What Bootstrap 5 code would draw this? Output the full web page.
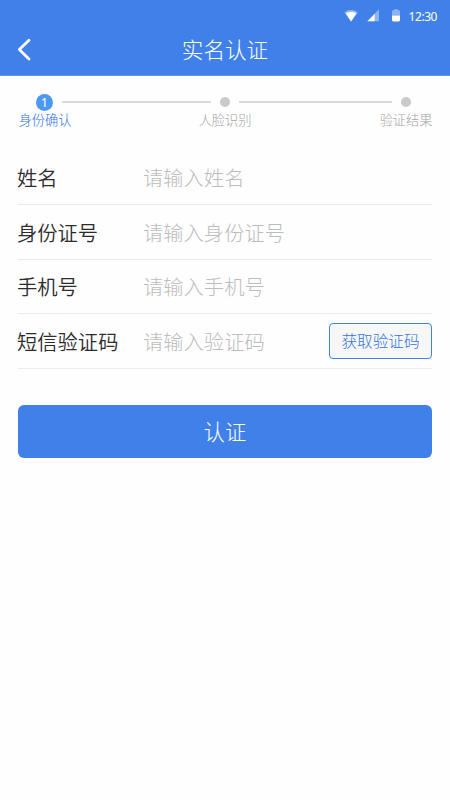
<!DOCTYPE html>
<html lang="zh-CN">
<head>
<meta charset="utf-8">
<meta name="viewport" content="width=device-width, initial-scale=1">
<title>实名认证</title>
<link href="https://cdn.jsdelivr.net/npm/bootstrap@5.3.0/dist/css/bootstrap.min.css" rel="stylesheet">
<style>
:root { --brand: #4081e9; }
body { font-family: "Noto Sans CJK SC", sans-serif; font-weight: 300; background: #fefefe; min-height: 800px; line-height: 1; }
.app-header { background: var(--brand); height: 76px; border-bottom: 1px solid #5b93ef; }
.status-bar { height: 31px; padding-right: 13px; padding-top: 1px; font: 400 12px/1 "Noto Sans", sans-serif; }
.status-bar .clock { margin-left: 9px; letter-spacing: -.45px; padding-top: 1px; }
.title-bar { display: grid; grid-template-columns: 50px 1fr 50px; height: 37px; }
.title-bar h1 { font-size: 21.6px; font-weight: 300; line-height: 35px; }
.back-link { padding-left: 17px; height: 37px; }
.stepper { padding: 16px 17.5px 0 18.5px; height: 54px; }
.step-item { width: 53px; font-size: 13.2px; color: #a4a4a4; }
.step-mark { height: 20px; }
.step-text { line-height: 16px; white-space: nowrap; }
.step-item.current { color: #2f74e6; }
.step-item.current .step-mark { padding-right: 1px; }
.step-dot { width: 10px; height: 10px; background: #cacaca; }
.step-num { width: 17px; height: 17px; background: #4a98f2; font: 400 13px/17px "Noto Sans", sans-serif; }
.step-line { height: 2px; background: #dadada; margin-top: 9px; }
.step-line.first { flex: 149 1 0; margin-left: -9.5px; margin-right: -12.5px; }
.step-line.second { flex: 153 1 0; margin-left: -12.5px; margin-right: -12.5px; }
.auth-form { margin: 20px 18px 0; }
.form-line { height: 54.67px; border-bottom: 1px solid #ebebeb; font-size: 20.3px; }
.form-line:nth-child(1) { height: 55px; }
.form-line:nth-child(2) { height: 54.6px; }
.form-line:nth-child(4) { height: 54.4px; }
.form-line label { flex: 0 0 126px; margin-left: -1px; color: #2c2c2c; font-weight: 350; white-space: nowrap; }
.form-line .form-control { font-size: 20.3px; font-weight: 300; height: 40px; min-width: 0; color: #2c2c2c; }
.form-line .form-control::placeholder { color: #bcbcbc; opacity: 1; }
.btn-code { width: 103px; height: 36px; border: 1px solid var(--brand); border-radius: 4px; background: #f7f7f7; color: #2f74e6; font-size: 15.6px; font-weight: 300; white-space: nowrap; }
.btn-submit { height: 53px; margin-top: 36px; border-radius: 6px; background: var(--brand); font-size: 21.4px; font-weight: 300; }
.btn-submit:hover { background: #3373dc; }
</style>
</head>
<body>
<header class="app-header text-white">
  <div class="status-bar d-flex align-items-center justify-content-end">
    <svg width="60" height="16" viewBox="0 0 60 16" aria-hidden="true">
      <path d="M4.6 4.2Q11 0 17.6 4.2L11.1 13.4Z" fill="#fff" opacity=".45"/>
      <path d="M5.6 5.3Q11 2.9 16.6 5.3L11.1 13.4Z" fill="#fff"/>
      <path d="M39 1.3V13.2H27.4Z" fill="#fff" opacity=".4"/>
      <path d="M34.7 5.8V13.2H27.4Z" fill="#fff"/>
      <path d="M52 7.5V3.5Q52 2.3 53.3 2.3H54V1.2H58V2.3H58.7Q60 2.3 60 3.5V7.5Z" fill="#fff" opacity=".4"/>
      <path d="M52 7.5H60V12Q60 13.4 58.7 13.4H53.3Q52 13.4 52 12Z" fill="#fff"/>
    </svg>
    <span class="clock">12:30</span>
  </div>
  <div class="title-bar">
    <a class="back-link d-flex align-items-center" href="#" aria-label="返回">
      <svg width="14" height="23" viewBox="0 0 14 23" fill="none" stroke="#fff" stroke-width="2.8" stroke-linecap="round" stroke-linejoin="round"><path d="M12 2.2L2.3 11.6L12 21"/></svg>
    </a>
    <h1 class="m-0 text-center">实名认证</h1>
  </div>
</header>
<main>
  <div class="stepper d-flex">
    <div class="step-item current text-center">
      <div class="step-mark d-flex align-items-center justify-content-center"><span class="step-num rounded-circle text-white">1</span></div>
      <div class="step-text">身份确认</div>
    </div>
    <div class="step-line first"></div>
    <div class="step-item text-center">
      <div class="step-mark d-flex align-items-center justify-content-center"><span class="step-dot rounded-circle"></span></div>
      <div class="step-text">人脸识别</div>
    </div>
    <div class="step-line second"></div>
    <div class="step-item text-center">
      <div class="step-mark d-flex align-items-center justify-content-center"><span class="step-dot rounded-circle"></span></div>
      <div class="step-text">验证结果</div>
    </div>
  </div>
  <form class="auth-form">
    <div class="form-line d-flex align-items-center">
      <label for="name">姓名</label>
      <input id="name" class="form-control border-0 bg-transparent p-0" placeholder="请输入姓名">
    </div>
    <div class="form-line d-flex align-items-center">
      <label for="idno">身份证号</label>
      <input id="idno" class="form-control border-0 bg-transparent p-0" placeholder="请输入身份证号">
    </div>
    <div class="form-line d-flex align-items-center">
      <label for="phone">手机号</label>
      <input id="phone" class="form-control border-0 bg-transparent p-0" placeholder="请输入手机号">
    </div>
    <div class="form-line d-flex align-items-center">
      <label for="code">短信验证码</label>
      <input id="code" class="form-control border-0 bg-transparent p-0" placeholder="请输入验证码">
      <button type="button" class="btn btn-code p-0 flex-shrink-0">获取验证码</button>
    </div>
    <button type="button" class="btn btn-submit w-100 border-0 p-0 text-white">认证</button>
  </form>
</main>
<script src="https://cdn.jsdelivr.net/npm/bootstrap@5.3.0/dist/js/bootstrap.bundle.min.js"></script>
</body>
</html>
